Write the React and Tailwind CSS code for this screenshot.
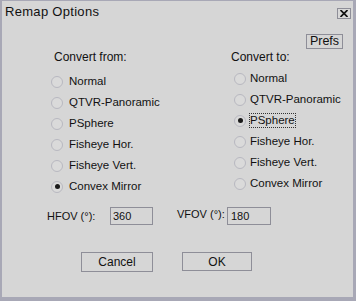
const FROM = ["Normal", "QTVR-Panoramic", "PSphere", "Fisheye Hor.", "Fisheye Vert.", "Convex Mirror"];

function Radio({ label, checked, focused, gap }) {
  return (
    <div className="flex items-center h-[21px]">
      <span className="w-[12px] h-[12px] rounded-full border border-[#b8b8c0] bg-[#dadada] flex items-center justify-center shrink-0">
        {checked && <span className="w-[5px] h-[5px] rounded-full bg-[#1a1a1a]" />}
      </span>
      <span
        className={
          gap +
          " text-[11.5px] text-[#111] leading-[13px] whitespace-nowrap " +
          (focused ? "outline outline-1 outline-dotted outline-[#333]" : "")
        }
      >
        {label}
      </span>
    </div>
  );
}

export default function App() {
  return (
    <div
      className="w-[356px] h-[301px] bg-[#d6d6d6] border-l-2 border-r-[3px] border-b-[4px] border-t border-[#a8a8b6] flex flex-col"
      style={{ fontFamily: '"Liberation Sans", Arial, sans-serif' }}
    >
      <div className="flex items-center justify-between h-[22px] pl-[3px] pr-[2px]">
        <span className="text-[13px] text-[#111] tracking-[0.3px]">Remap Options</span>
        <button className="mt-[2px] w-[14px] h-[11px] border border-[#8e8e98] bg-[#d8d8d8] flex items-center justify-center">
          <svg width="8" height="7" viewBox="0 0 8 7">
            <path d="M0.5 0 L7.5 7 M7.5 0 L0.5 7" stroke="#111" strokeWidth="1.7" />
          </svg>
        </button>
      </div>
      <div className="flex justify-end pr-[10px] mt-[11px]">
        <button className="w-[37px] h-[15px] border border-[#8e8e98] bg-[#d6d6d6] text-[12.5px] leading-[13px] text-[#111]">
          Prefs
        </button>
      </div>
      <div className="flex mt-[1px]">
        <div className="ml-[49px] w-[183px]">
          <div className="pl-[3px] text-[12px] text-[#111] leading-[14px] mb-[7px]">Convert from:</div>
          {FROM.map((f) => (
            <Radio key={f} label={f} checked={f === "Convex Mirror"} gap="ml-[6px]" />
          ))}
        </div>
        <div>
          <div className="-ml-[3px] text-[12px] text-[#111] leading-[14px] mb-[4px]">Convert to:</div>
          {FROM.map((f) => (
            <Radio key={f} label={f} checked={f === "PSphere"} focused={f === "PSphere"} gap="ml-[4px]" />
          ))}
        </div>
      </div>
      <div className="flex items-center mt-[10px] ml-[45px] text-[11px] text-[#111] whitespace-nowrap">
        <span className="w-[63px]">HFOV (°):</span>
        <div className="w-[43px] h-[18px] border border-[#8e8e98] pl-[2px] leading-[16px]">360</div>
        <span className="ml-[24px] w-[50px] -mt-[3px]">VFOV (°):</span>
        <div className="w-[44px] h-[18px] border border-[#8e8e98] pl-[3px] leading-[16px]">180</div>
      </div>
      <div className="flex mt-[27px] ml-[79px] text-[12px] text-[#111]">
        <button className="w-[72px] h-[20px] border border-[#8e8e98] leading-[18px]">Cancel</button>
        <button className="ml-[29px] w-[70px] h-[19px] border border-[#8e8e98] leading-[16px]">OK</button>
      </div>
    </div>
  );
}
